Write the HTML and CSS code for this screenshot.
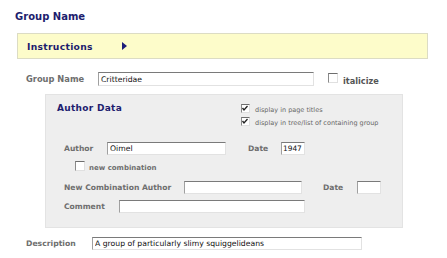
FILE: index.html
```html
<!DOCTYPE html>
<html>
<head>
<meta charset="utf-8">
<link rel="stylesheet" href="styles.css">
</head>
<body>
<div class="page">
  <h1 class="title">Group Name</h1>
  <div class="instructions">
    <span class="instr-text">Instructions</span>
    <svg class="arrow" width="5" height="8" viewBox="0 0 5 8"><polygon points="0,0 5,4 0,8" fill="#1d1d7a"/></svg>
  </div>

  <div class="row row-group">
    <span class="lbl lbl-group">Group Name</span>
    <input class="field f-group" type="text" value="Critteridae">
    <span class="cb cb-italic"></span>
    <span class="lbl lbl-italic">italicize</span>
  </div>

  <div class="panel">
    <div class="panel-top">
      <h2 class="panel-title">Author Data</h2>
      <div class="checks">
        <div class="check-row"><span class="cb checked"><svg width="8" height="7" viewBox="0 0 8 7"><polyline points="1.5,3 3,5 6.5,1" fill="none" stroke="#222" stroke-width="1.3"/></svg></span><span class="small">display in page titles</span></div>
        <div class="check-row"><span class="cb checked"><svg width="8" height="7" viewBox="0 0 8 7"><polyline points="1.5,3 3,5 6.5,1" fill="none" stroke="#222" stroke-width="1.3"/></svg></span><span class="small">display in tree/list of containing group</span></div>
      </div>
    </div>

    <div class="prow prow-author">
      <span class="lbl w-author">Author</span>
      <input class="field f-author" type="text" value="Oimel">
      <span class="lbl w-date">Date</span>
      <input class="field f-date" type="text" value="1947">
    </div>

    <div class="prow prow-newcomb">
      <span class="cb cb-new"></span>
      <span class="lbl lbl-new">new combination</span>
    </div>

    <div class="prow prow-nca">
      <span class="lbl w-nca">New Combination Author</span>
      <input class="field f-nca" type="text" value="">
      <span class="lbl w-date2">Date</span>
      <input class="field f-date" type="text" value="">
    </div>

    <div class="prow prow-comment">
      <span class="lbl w-comment">Comment</span>
      <input class="field f-comment" type="text" value="">
    </div>
  </div>

  <div class="row row-desc">
    <span class="lbl lbl-desc">Description</span>
    <input class="field f-desc" type="text" value="A group of particularly slimy squiggelideans">
  </div>
</div>
</body>
</html>
```
FILE: styles.css
```css
* { box-sizing: border-box; }
html, body { margin: 0; padding: 0; background: #ffffff; }
body { font-family: "DejaVu Sans", Verdana, sans-serif; color: #222; }
.page { width: 447px; padding-top: 10px; }

.title {
  margin: 0 0 0 15px;
  height: 13px;
  line-height: 13px;
  font-size: 10px;
  font-weight: bold;
  color: #1d1d6e;
}

.instructions {
  margin: 10px 0 0 17px;
  width: 411px;
  height: 26px;
  background: #fdfcca;
  border: 1px solid #dcdcc4;
  display: flex;
  align-items: center;
  padding-left: 9px;
}
.instr-text {
  font-size: 9.2px;
  letter-spacing: 0.3px;
  font-weight: bold;
  color: #1d1d6e;
  width: 95px;
}
.arrow { display: block; }

.row { display: flex; align-items: center; height: 14px; }
.row-group { margin: 13px 0 0 26px; }
.row-desc { margin: 9px 0 0 26px; height: 13px; }

.lbl {
  font-size: 7.6px;
  font-weight: bold;
  color: #6e6e6e;
  white-space: nowrap;
  flex: none;
}
.lbl-group { width: 72px; font-size: 8.3px; }
.lbl-italic { font-size: 8.2px; margin-left: 5px; color: #555; padding-top: 3px; }
.lbl-desc { width: 66px; font-size: 7.7px; }

.field {
  display: block;
  flex: none;
  height: 14px;
  margin: 0;
  padding: 0 0 0 2px;
  background: #ffffff;
  border-top: 1px solid #7a7a7a;
  border-left: 1px solid #a0a0a0;
  border-right: 1px solid #e2e2e2;
  border-bottom: 1px solid #e2e2e2;
  font-family: "DejaVu Sans", sans-serif;
  font-size: 7.7px;
  color: #111;
  outline: none;
}
.f-group { width: 216px; }
.f-desc { width: 270px; height: 13px; }
.f-author { width: 119px; height: 13px; }
.f-date { width: 24px; height: 13px; padding-left: 1px; font-size: 7.4px; }
.f-nca { width: 118px; height: 13px; }
.f-comment { width: 186px; height: 13px; }

.cb {
  display: inline-flex;
  align-items: center;
  justify-content: center;
  flex: none;
  width: 10px;
  height: 10px;
  background: #ffffff;
  border-top: 1px solid #6e6e6e;
  border-left: 1px solid #8a8a8a;
  border-right: 1px solid #e0e0e0;
  border-bottom: 1px solid #e0e0e0;
}
.cb svg { display: block; margin: -1px 0 0 -1px; }
.cb-italic { margin-left: 14px; margin-top: -2px; }

.panel {
  margin: 8px 0 0 45px;
  width: 358px;
  height: 134px;
  background: #eeeeee;
  border: 1px solid #e3e3e3;
  padding: 7px 0 0 11px;
}
.panel-top { display: flex; }
.panel-title {
  margin: 0;
  width: 184px;
  height: 13px;
  line-height: 13px;
  font-size: 9px;
  letter-spacing: 0.3px;
  font-weight: bold;
  color: #1d1d6e;
}
.checks { display: flex; flex-direction: column; }
.check-row { display: flex; align-items: center; height: 13px; }
.check-row .cb { width: 9px; height: 9px; }
.small {
  font-size: 6.5px;
  color: #666;
  margin-left: 5px;
  padding-top: 2px;
}

.prow { display: flex; align-items: center; height: 13px; margin-left: 7px; }
.prow-author { margin-top: 14px; }
.prow-newcomb { margin-top: 5px; margin-left: 18px; }
.prow-nca { margin-top: 8px; }
.prow-comment { margin-top: 6px; }

.w-author { width: 43px; }
.w-date { width: 33px; margin-left: 22px; }
.w-nca { width: 120px; }
.w-date2 { width: 34px; margin-left: 21px; }
.w-comment { width: 55px; }
.lbl-new { font-size: 7px; margin-left: 4px; padding-top: 3px; }
.cb-new { margin-top: -2px; }
```
